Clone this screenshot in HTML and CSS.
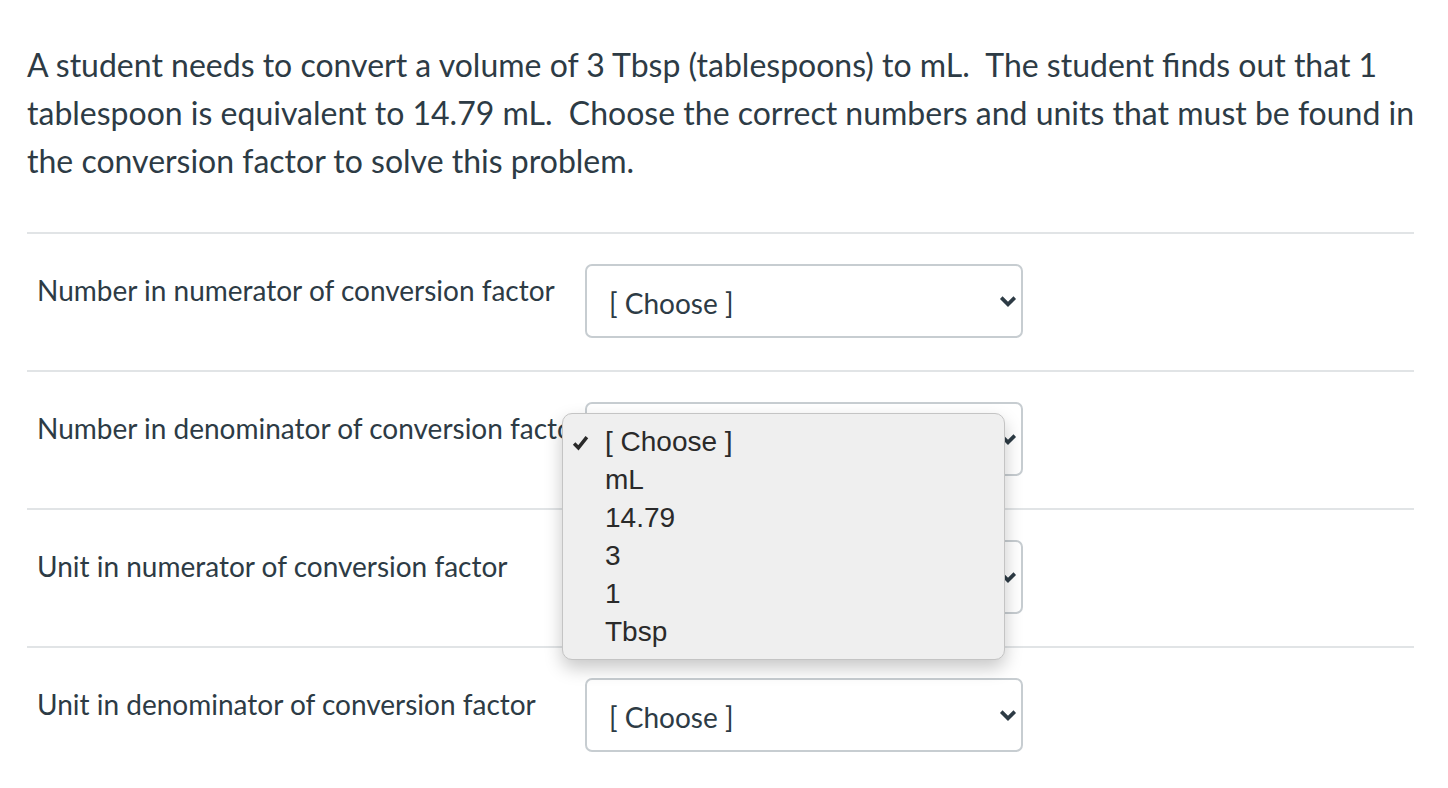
FILE: index.html
```html
<!DOCTYPE html>
<html lang="en">

<head>
  <meta charset="UTF-8" />
  <title>Quiz | Conversion factor</title>
  <link rel="stylesheet" href="styles.css">
</head>

<body>

  <div class="question">
    <p class="question-text">A student needs to convert a volume of 3 Tbsp (tablespoons) to mL.&nbsp; The student finds out that 1 tablespoon is equivalent to 14.79 mL.&nbsp; Choose the correct numbers and units that must be found in the conversion factor to solve this problem.</p>

    <div class="answers">
      <div class="answer-row">
        <label class="answer-label">Number in numerator of conversion factor</label>
        <div class="fake-select">
          <span>[ Choose ]</span>
          <svg class="chevron" viewBox="0 0 16 10"><path d="M2 2 L8 8 L14 2" /></svg>
        </div>
      </div>

      <div class="answer-row">
        <label class="answer-label">Number in denominator of conversion factor</label>
        <div class="fake-select open">
          <span>[ Choose ]</span>
          <svg class="chevron" viewBox="0 0 16 10"><path d="M2 2 L8 8 L14 2" /></svg>
          <!-- native option list, shown open -->
          <ul class="option-menu">
            <li class="selected">
              <svg class="tick" viewBox="0 0 16 16"><path d="M2 9 L6 13 L14 3" /></svg>[ Choose ]
            </li>
            <li>mL</li>
            <li>14.79</li>
            <li>3</li>
            <li>1</li>
            <li>Tbsp</li>
          </ul>
        </div>
      </div>

      <div class="answer-row">
        <label class="answer-label">Unit in numerator of conversion factor</label>
        <div class="fake-select">
          <span>[ Choose ]</span>
          <svg class="chevron" viewBox="0 0 16 10"><path d="M2 2 L8 8 L14 2" /></svg>
        </div>
      </div>

      <div class="answer-row">
        <label class="answer-label">Unit in denominator of conversion factor</label>
        <div class="fake-select">
          <span>[ Choose ]</span>
          <svg class="chevron" viewBox="0 0 16 10"><path d="M2 2 L8 8 L14 2" /></svg>
        </div>
      </div>
    </div>
  </div>

</body>

</html>
```

FILE: styles.css
```css
body {
  margin: 0;
  background: #fff;
  color: #2d3b45;
  font-family: Lato, "Open Sans", sans-serif;
}

.question {
  padding: 41px 34px 0 27px;
}

.question-text {
  margin: 0 -20px 0 0;
  font-size: 32px;
  line-height: 48px;
}

.answers {
  margin-top: 47px;
}

.answer-row {
  display: flex;
  align-items: flex-start;
  border-top: 2px solid #e1e4e6;
  padding: 30px 0 32px 10px;
}

.answer-label {
  width: 548px;
  font-size: 28px;
  line-height: 48px;
  margin-top: 2px;
  white-space: nowrap;
}

.fake-select {
  position: relative;
  box-sizing: border-box;
  width: 438px;
  height: 74px;
  border: 2px solid #c7cdd1;
  border-radius: 7px;
  display: flex;
  align-items: center;
  padding: 4px 0 0 22px;
  font-size: 28px;
}

.fake-select span {
  flex: 1;
}

.chevron {
  width: 18px;
  height: 12px;
  margin-right: 4px;
  margin-top: -4px;
  fill: none;
  stroke: #2d3b45;
  stroke-width: 3.2;
}

/* open popup list drawn over the page */
.option-menu {
  position: absolute;
  left: -25px;
  top: 9px;
  width: 443px;
  box-sizing: border-box;
  margin: 0;
  padding: 9px 0 8px 0;
  list-style: none;
  background: #efefef;
  border: 1px solid #c4c4c4;
  border-radius: 10px;
  box-shadow: 0 8px 18px rgba(0, 0, 0, 0.22);
  font-family: "Liberation Sans", Arial, sans-serif;
  font-size: 28px;
  color: #2a2a2a;
  z-index: 5;
}

.option-menu li {
  height: 38px;
  line-height: 38px;
  padding-left: 42px;
  position: relative;
}

.tick {
  position: absolute;
  left: 9px;
  top: 11px;
  width: 17px;
  height: 17px;
  fill: none;
  stroke: #2a2a2a;
  stroke-width: 3.3;
}
```
